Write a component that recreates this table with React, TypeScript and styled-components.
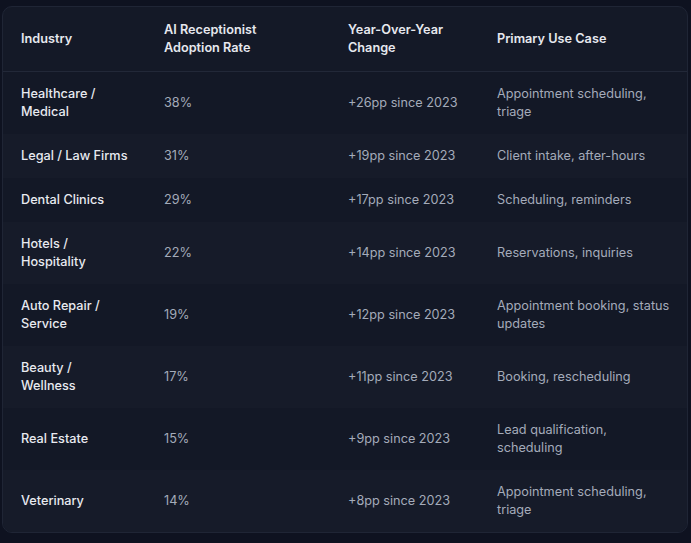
import React from "react";
import styled, { createGlobalStyle } from "styled-components";

const Global = createGlobalStyle`
  html, body { margin: 0; padding: 0; background: #0e1220; }
  body { font-family: Inter, "Noto Sans", sans-serif; -webkit-font-smoothing: antialiased; }
`;

const Page = styled.div`
  padding: 6px 3px 0 2px;
  width: 691px;
  height: 543px;
  box-sizing: border-box;
  background: #0e1220;
`;

const Card = styled.div`
  border: 1px solid #1f2535;
  border-radius: 10px;
  background: #141927;
  overflow: hidden;
`;

const Table = styled.table`
  width: 100%;
  border-collapse: collapse;
  table-layout: fixed;
`;

const HeadCell = styled.th<{ $w?: number }>`
  text-align: left;
  font-size: 12.7px;
  line-height: 18px;
  font-weight: 600;
  color: #e6e8ee;
  padding: 14px 18px 14px 18px;
  vertical-align: middle;
  border-bottom: 1px solid #222838;
  width: ${(p) => (p.$w ? `${p.$w}px` : "auto")};
  box-sizing: border-box;
  &:last-child { padding-right: 14px; }
`;

const Row = styled.tr<{ $alt: boolean }>`
  background: ${(p) => (p.$alt ? "#161b29" : "#131826")};
  & + & td { border-top: 1px solid #1e2433; }
`;

const Cell = styled.td<{ $strong?: boolean }>`
  font-size: 12.7px;
  line-height: 18px;
  padding: 13px 18px 13px 18px;
  vertical-align: middle;
  color: ${(p) => (p.$strong ? "#e8eaf0" : "#a4abba")};
  font-weight: ${(p) => (p.$strong ? 500 : 400)};
  &:last-child { padding-right: 14px; }
`;

const rows = [
  ["Healthcare / Medical", "38%", "+26pp since 2023", "Appointment scheduling, triage"],
  ["Legal / Law Firms", "31%", "+19pp since 2023", "Client intake, after-hours"],
  ["Dental Clinics", "29%", "+17pp since 2023", "Scheduling, reminders"],
  ["Hotels / Hospitality", "22%", "+14pp since 2023", "Reservations, inquiries"],
  ["Auto Repair / Service", "19%", "+12pp since 2023", "Appointment booking, status updates"],
  ["Beauty / Wellness", "17%", "+11pp since 2023", "Booking, rescheduling"],
  ["Real Estate", "15%", "+9pp since 2023", "Lead qualification, scheduling"],
  ["Veterinary", "14%", "+8pp since 2023", "Appointment scheduling, triage"],
];

export default function App() {
  return (
    <Page>
      <Global />
      <Card>
        <Table>
          <thead>
            <tr>
              <HeadCell $w={143}>Industry</HeadCell>
              <HeadCell $w={184}>AI Receptionist Adoption Rate</HeadCell>
              <HeadCell $w={149}>Year-Over-Year Change</HeadCell>
              <HeadCell>Primary Use Case</HeadCell>
            </tr>
          </thead>
          <tbody>
            {rows.map((r, i) => (
              <Row key={r[0]} $alt={i % 2 === 1}>
                <Cell $strong>{r[0]}</Cell>
                <Cell>{r[1]}</Cell>
                <Cell>{r[2]}</Cell>
                <Cell>{r[3]}</Cell>
              </Row>
            ))}
          </tbody>
        </Table>
      </Card>
    </Page>
  );
}
